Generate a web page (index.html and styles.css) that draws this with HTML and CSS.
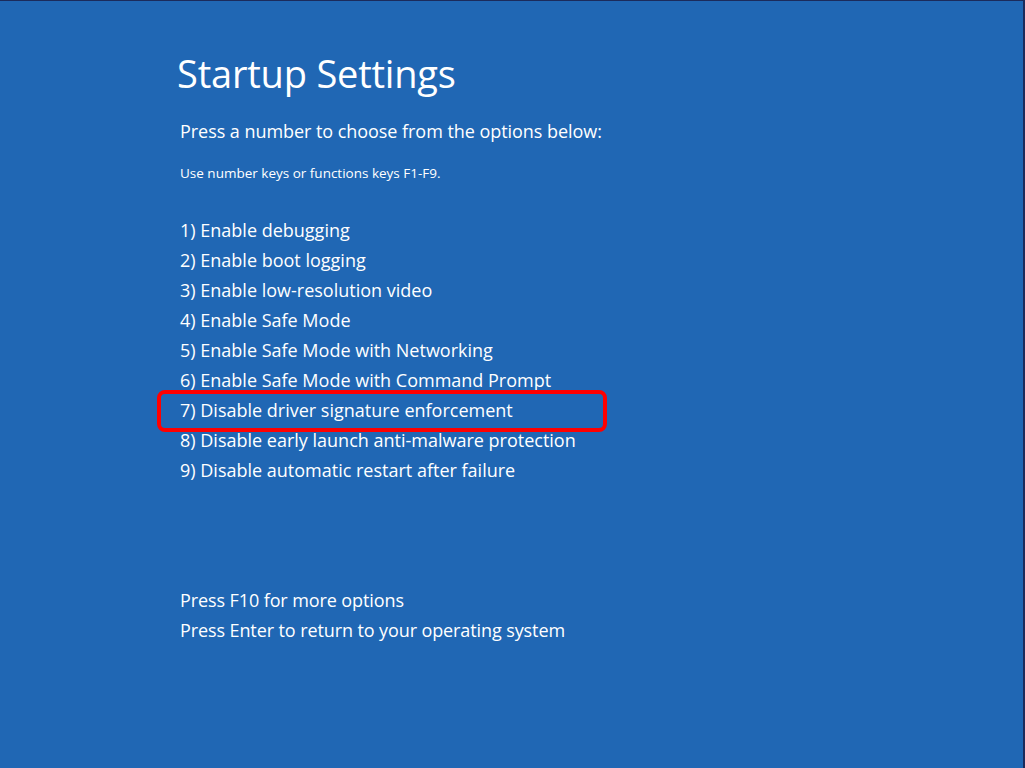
FILE: index.html
```html
<!DOCTYPE html>
<html lang="en">
<head>
<meta charset="utf-8">
<title>Startup Settings</title>
<link rel="stylesheet" href="styles.css">
</head>
<body>
<div class="screen">
  <div class="content">
    <h1 class="title">Startup Settings</h1>
    <p class="lead">Press a number to choose from the options below:</p>
    <p class="hint">Use number keys or functions keys F1-F9.</p>
    <ul class="options">
      <li class="option">1) Enable debugging</li>
      <li class="option">2) Enable boot logging</li>
      <li class="option">3) Enable low-resolution video</li>
      <li class="option">4) Enable Safe Mode</li>
      <li class="option">5) Enable Safe Mode with Networking</li>
      <li class="option">6) Enable Safe Mode with Command Prompt</li>
      <li class="option highlighted">7) Disable driver signature enforcement</li>
      <li class="option">8) Disable early launch anti-malware protection</li>
      <li class="option">9) Disable automatic restart after failure</li>
    </ul>
    <ul class="footer">
      <li class="option footer-line">Press F10 for more options</li>
      <li class="option footer-line">Press Enter to return to your operating system</li>
    </ul>
  </div>
</div>
</body>
</html>
```
FILE: styles.css
```css
html, body {
  margin: 0;
  padding: 0;
}
body {
  width: 1025px;
  height: 768px;
  overflow: hidden;
  background: #2067b4;
  font-family: "Open Sans", "Noto Sans", sans-serif;
  color: #ffffff;
}
.screen {
  box-sizing: border-box;
  width: 1025px;
  height: 768px;
  border-top: 1px solid #1b2b5c;
  border-right: 2px solid #1b2b5c;
  background: #2067b4;
}
.content {
  padding-left: 180px;
  padding-top: 46px;
}
.title {
  margin: 0 0 0 -3px;
  font-size: 38px;
  font-weight: 400;
  line-height: 52px;
  letter-spacing: -0.2px;
}
.lead {
  margin: 17px 0 0;
  font-size: 18px;
  line-height: 30px;
  letter-spacing: -0.05px;
}
.hint {
  margin: 17px 0 0;
  font-size: 13.5px;
  line-height: 20px;
  letter-spacing: 0;
}
.options, .footer {
  list-style: none;
  margin: 0;
  padding: 0;
}
.options {
  margin-top: 32px;
}
.footer {
  margin-top: 100px;
}
.option {
  font-size: 18px;
  line-height: 30px;
  letter-spacing: 0;
}
.footer-line {
  letter-spacing: -0.1px;
}
.highlighted {
  position: relative;
}
.highlighted::after {
  content: "";
  position: absolute;
  left: -23px;
  top: -5px;
  width: 442px;
  height: 34px;
  border: 4px solid #ff0000;
  border-radius: 8px;
}
```
